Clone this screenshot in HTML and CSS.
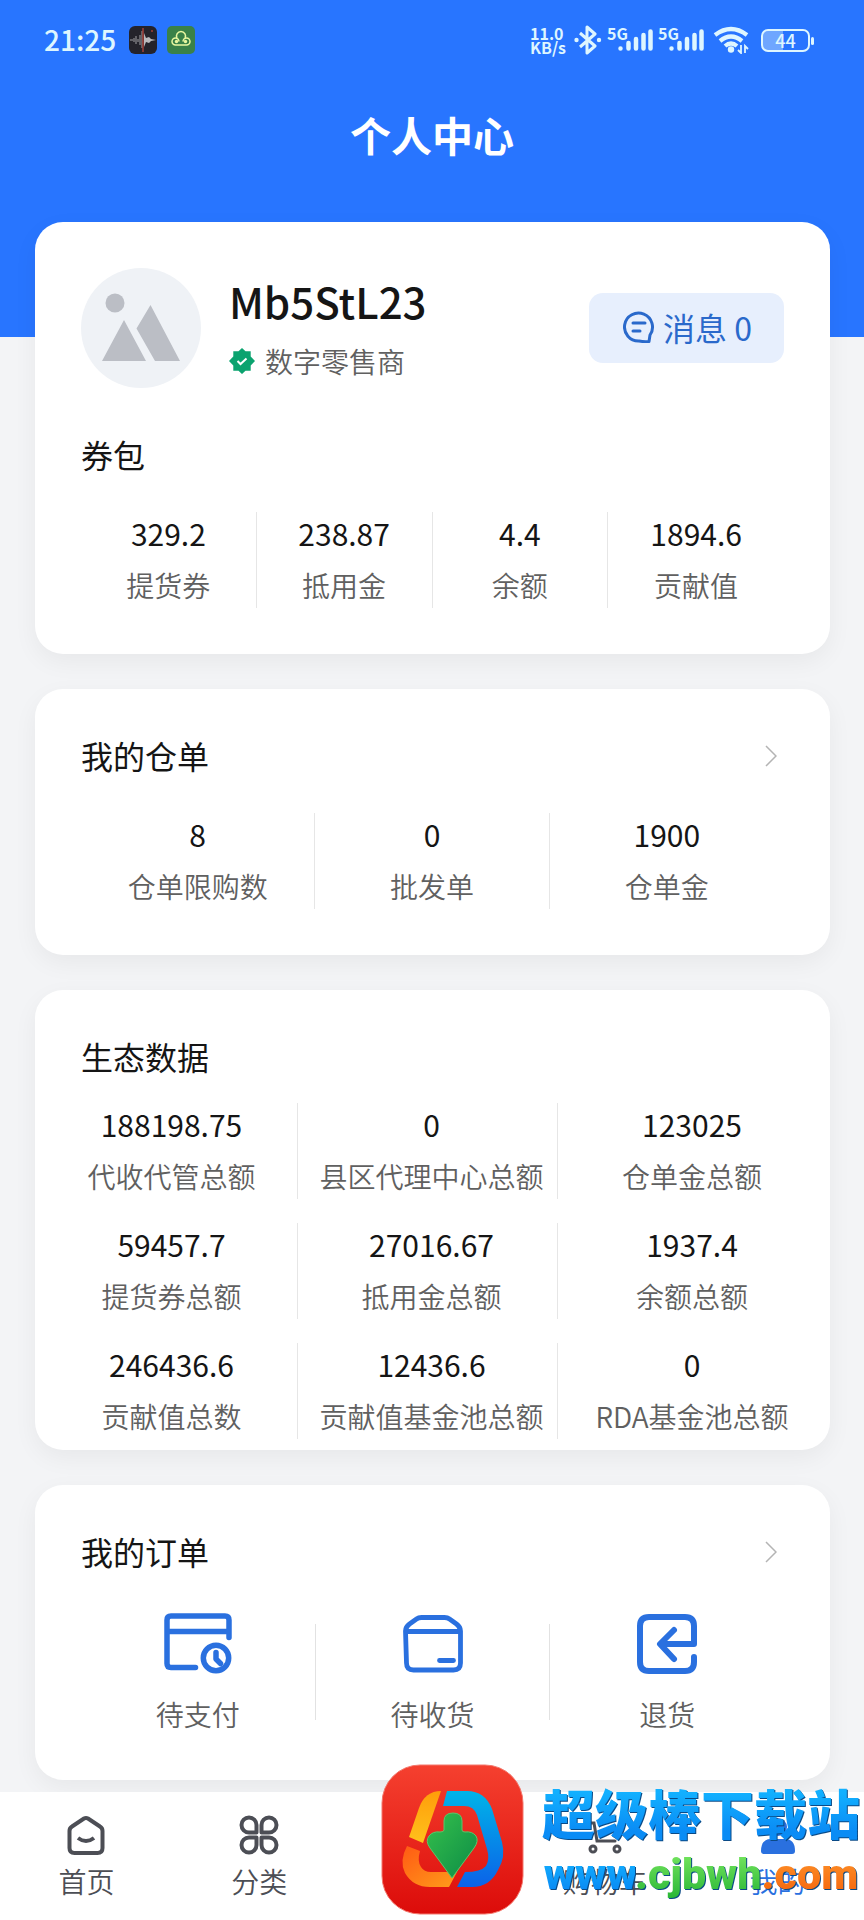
FILE: index.html
```html
<!DOCTYPE html>
<html lang="zh-CN">
  <head>
    <meta charset="utf-8">
    <title>个人中心</title>
    <meta name="viewport" content="width=device-width, initial-scale=1.0">
    <link rel="stylesheet" href="styles.css">
  </head>
  <body>
    <header class="top">
      <div class="status">
        <span class="time">21:25</span>
        <svg class="app" width="28" height="28" viewBox="0 0 28 28">
          <rect width="28" height="28" rx="6" fill="#24232b"/>
          <path d="M1 14h3M5 12v4M7 10v8M9 13v3M11 9v10M13 5v17" stroke="#77777c" stroke-width="1.5"/>
          <path d="M15 7l2 5 3-1 2 2 5 1-5 1-2 2-3-1-2 5z" fill="#b9b9bd"/>
          <path d="M14 2v24" stroke="#a3403a" stroke-width="1.5"/>
          <circle cx="23" cy="5" r="1" fill="#a3403a"/>
        </svg>
        <svg class="app" width="28" height="28" viewBox="0 0 28 28">
          <rect width="28" height="28" rx="5" fill="#3a8148"/>
          <path d="M10 12a4.500 4.500 0 1 1 8 0M8.500 19h11a3.500 3.500 0 1 0-3.500-3.500M8.500 19A3.500 3.500 0 1 1 12 15.500" fill="none" stroke="#e9f7a0" stroke-width="1.500"/>
          <circle cx="9.500" cy="15.500" r="1.700" fill="#e9f7a0"/>
          <circle cx="18.500" cy="15.500" r="1.700" fill="#e9f7a0"/>
        </svg>
        <span class="speed">11.0<br>KB/s</span>
        <svg class="bt" width="28" height="30" viewBox="0 0 28 30">
          <path d="M6 8l15 13-8 7V2l8 7L6 22" fill="none" stroke="currentColor" stroke-width="3" stroke-linejoin="round"/>
          <circle cx="2.5" cy="15" r="2.2" fill="currentColor"/>
          <circle cx="25" cy="15" r="2.2" fill="currentColor"/>
        </svg>
        <span class="signal">
          <b>5G</b>
          <svg width="35" height="22" viewBox="0 0 35 22"><path d="M2.500 19.500v0M10.500 14v5.500M18 10v9.500M25.500 6v13.500M32.500 2.500v17" stroke="currentColor" stroke-width="4.500" stroke-linecap="round"/></svg>
        </span>
        <span class="signal">
          <b>5G</b>
          <svg width="35" height="22" viewBox="0 0 35 22"><path d="M2.500 19.500v0M10.500 14v5.500M18 10v9.500M25.500 6v13.500M32.500 2.500v17" stroke="currentColor" stroke-width="4.500" stroke-linecap="round"/></svg>
        </span>
        <svg class="wifi" width="36" height="28" viewBox="0 0 36 28">
          <path d="M2 9q16-12 32 0M7 15q11-9 22 0M12 20q6-5 12 0" fill="none" stroke="currentColor" stroke-width="4.200"/>
          <circle cx="18" cy="23.500" r="3.200" fill="currentColor"/>
          <path d="M28 19v8l-3-3M32 27v-7l3 3" fill="none" stroke="currentColor" stroke-width="1.800"/>
        </svg>
        <span class="battery">44</span>
      </div>
      <h1>个人中心</h1>
    </header>

    <main>
      <section class="card first">
        <div class="user">
          <svg class="avatar" width="120" height="120" viewBox="0 0 120 120">
            <circle cx="60" cy="60" r="60" fill="#eff2f6"/>
            <g fill="#bbbec5">
              <circle cx="34" cy="35" r="9.500"/>
              <path d="M43 52l22 41H21zM69.500 37L99 93H74L55.500 60.500z"/>
            </g>
          </svg>
          <div class="who">
            <div class="name">Mb5StL23</div>
            <div class="role">
              <svg width="26" height="26" viewBox="0 0 26 26">
                <path d="M13 0l3.500 3.300h5.200v5.200L26 13l-4.300 4.500v5.200h-5.200L13 26l-3.500-3.300H4.300v-5.200L0 13l4.300-4.500V3.300h5.200z" fill="#0ba36f"/>
                <path d="M8.500 13l3 3 6-5.500" fill="none" stroke="#fff" stroke-width="2"/>
              </svg>
              <span>数字零售商</span>
            </div>
          </div>
          <button class="message" type="button">
            <svg width="32" height="32" viewBox="0 0 32 32" fill="none" stroke="currentColor" stroke-width="3" stroke-linecap="round" stroke-linejoin="round">
              <path d="M27 24a14 14 0 1 0-11 6q5 1 10 .5z"/>
              <path d="M10 12h12M10 20h7"/>
            </svg>
            <span>消息 0</span>
          </button>
        </div>
        <h2>券包</h2>
        <div class="stats four">
          <div class="stat"><b>329.2</b><span>提货券</span></div>
          <div class="stat"><b>238.87</b><span>抵用金</span></div>
          <div class="stat"><b>4.4</b><span>余额</span></div>
          <div class="stat"><b>1894.6</b><span>贡献值</span></div>
        </div>
      </section>

      <section class="card">
        <div class="head">
          <h2>我的仓单</h2>
          <a href="#" aria-label="我的仓单"><svg width="12" height="22" viewBox="0 0 12 22"><path d="M1 1l10 10L1 21" fill="none" stroke="#b4b4b4" stroke-width="1.500"/></svg></a>
        </div>
        <div class="stats">
          <div class="stat"><b>8</b><span>仓单限购数</span></div>
          <div class="stat"><b>0</b><span>批发单</span></div>
          <div class="stat"><b>1900</b><span>仓单金</span></div>
        </div>
      </section>

      <section class="card data">
        <h2>生态数据</h2>
        <div class="stats">
          <div class="stat"><b>188198.75</b><span>代收代管总额</span></div>
          <div class="stat"><b>0</b><span>县区代理中心总额</span></div>
          <div class="stat"><b>123025</b><span>仓单金总额</span></div>
          <div class="stat"><b>59457.7</b><span>提货券总额</span></div>
          <div class="stat"><b>27016.67</b><span>抵用金总额</span></div>
          <div class="stat"><b>1937.4</b><span>余额总额</span></div>
          <div class="stat"><b>246436.6</b><span>贡献值总数</span></div>
          <div class="stat"><b>12436.6</b><span>贡献值基金池总额</span></div>
          <div class="stat"><b>0</b><span>RDA基金池总额</span></div>
        </div>
      </section>

      <section class="card">
        <div class="head">
          <h2>我的订单</h2>
          <a href="#" aria-label="我的订单"><svg width="12" height="22" viewBox="0 0 12 22"><path d="M1 1l10 10L1 21" fill="none" stroke="#b4b4b4" stroke-width="1.500"/></svg></a>
        </div>
        <div class="orders">
          <a class="order" href="#">
            <svg width="68" height="62" viewBox="0 0 68 62" fill="none" stroke="currentColor" stroke-width="5.500" stroke-linecap="round" stroke-linejoin="round">
              <path d="M31.500 54.500H7q-4 0-4-4V7q0-4 4-4h54q4 0 4 4v17.500M3 18.500h62"/>
              <circle cx="52" cy="45" r="12.700"/>
              <path d="M52 39.500v6.500l4.500 4.500"/>
            </svg>
            <span>待支付</span>
          </a>
          <i class="line"></i>
          <a class="order" href="#">
            <svg width="62" height="62" viewBox="0 0 62 62" fill="none" stroke="currentColor" stroke-width="4.800" stroke-linecap="round" stroke-linejoin="round">
              <path d="M3.500 18q0-4 4-7l7-5q2-1.500 5-1.500h23q3 0 5 1.500l7 5q4 3 4 7v32q0 7-7 7h-40q-7 0-7-7zM4 18.500h54M37.500 47.500h14"/>
            </svg>
            <span>待收货</span>
          </a>
          <i class="line"></i>
          <a class="order" href="#">
            <svg width="62" height="62" viewBox="0 0 62 62" fill="none" stroke="currentColor" stroke-width="6" stroke-linecap="round" stroke-linejoin="round">
              <path d="M58 44v5q0 9-9 9H13q-9 0-9-9V13q0-9 9-9h36q9 0 9 9v18H25M38 17L24 31l14 15"/>
            </svg>
            <span>退货</span>
          </a>
        </div>
      </section>
    </main>

    <nav class="tabs">
      <a class="tab" href="#">
        <svg width="40" height="40" viewBox="0 0 40 40" fill="none" stroke="currentColor" stroke-width="4" stroke-linecap="round" stroke-linejoin="round">
          <path d="M3.500 16q0-3 2.500-4.500L18 3.500q2-1.200 4 0l12 8q2.500 1.500 2.500 4.500v17q0 5-5 5h-23q-5 0-5-5z"/>
          <path d="M12 23q8 6 16 0" stroke-linecap="butt"/>
        </svg>
        <span>首页</span>
      </a>
      <a class="tab" href="#">
        <svg width="40" height="40" viewBox="0 0 40 40" fill="none" stroke="currentColor" stroke-width="4" stroke-linejoin="round">
          <path d="M17.500 17.500V10A7.500 7.500 0 1 0 10 17.500zM22.500 17.500V10A7.500 7.500 0 1 1 30 17.500zM17.500 22.500V30A7.500 7.500 0 1 1 10 22.500zM22.500 22.500V30A7.500 7.500 0 1 0 30 22.500z"/>
        </svg>
        <span>分类</span>
      </a>
      <a class="tab cart" href="#">
        <svg width="40" height="40" viewBox="0 0 40 40" fill="none" stroke="currentColor" stroke-width="3">
          <path d="M4 8h5l3 18h18" stroke-linecap="round"/>
          <circle cx="8" cy="34" r="3"/>
          <circle cx="32" cy="34" r="3"/>
        </svg>
        <span>购物车</span>
      </a>
      <a class="tab active" href="#">
        <svg width="40" height="40" viewBox="0 0 40 40" fill="currentColor">
          <circle cx="20" cy="12" r="9"/>
          <path d="M3 36q0-12 10-12h14q10 0 10 12 0 3-3 3H6q-3 0-3-3z"/>
        </svg>
        <span>我的</span>
      </a>

      <div class="mark">
        <svg width="143" height="151" viewBox="0 0 143 151">
          <defs>
            <linearGradient id="red" x1="0" y1="0" x2="0" y2="1"><stop offset="0" stop-color="#f5402f"/><stop offset="1" stop-color="#dc0c0a"/></linearGradient>
            <linearGradient id="blue" x1="0" y1="0" x2="0" y2="1"><stop offset="0" stop-color="#00b4e8"/><stop offset="1" stop-color="#0b62e8"/></linearGradient>
            <linearGradient id="yellow" x1="0" y1="0" x2="0" y2="1"><stop offset="0" stop-color="#ff9d0a"/><stop offset="1" stop-color="#ffc21c"/></linearGradient>
            <linearGradient id="orange" x1="0" y1="0" x2="1" y2="1"><stop offset="0" stop-color="#ff5a14"/><stop offset="1" stop-color="#ff9c1a"/></linearGradient>
            <linearGradient id="green" x1="0" y1="0" x2="1" y2="1"><stop offset="0" stop-color="#36c04c"/><stop offset="1" stop-color="#0c8c46"/></linearGradient>
          </defs>
          <rect x="1" y="1" width="141" height="149" rx="38" fill="url(#red)" stroke="#f4776c"/>
          <path d="M60 27L42 79 28 73 38 44q6-17 22-17z" fill="url(#yellow)"/>
          <path d="M66 27h20q18 0 25 18l10 33q4 15-4 28-8 17-26 17H76l8-15q16 0 21-6 4-7 1-17L96 51q-3-9-13-9H62z" fill="url(#blue)"/>
          <path d="M26 82l13 5q-3 10 1 16 3 5 10 5h26l-8 15H49q-17 0-25-14-6-12 2-27z" fill="url(#orange)"/>
          <path d="M63 57q0-8 9-8t9 8v9q0 2 3 2 7-1 11 4 3 5-2 12L71 114 49 84q-5-7-1-12 4-5 11-4 4 0 4-2z" fill="url(#green)" stroke="#5bc76a"/>
        </svg>
        <div class="words">
          <div class="site">超级棒下载站</div>
          <div class="url"><span class="www">www</span><span class="host">.cjbwh</span><span class="com">.com</span></div>
        </div>
      </div>
    </nav>
  </body>
</html>
```

FILE: styles.css
```css
* {
  box-sizing: border-box;
}

body {
  margin: 0;
  min-height: 100vh;
  display: flex;
  flex-direction: column;
  background: #f3f4f6;
  color: #151515;
  font-family: "Noto Sans CJK SC", sans-serif;
  font-size: 28px;
  line-height: 40px;
}

a {
  color: inherit;
  text-decoration: none;
}

h1, h2 {
  margin: 0;
  font-weight: 400;
}

svg {
  display: block;
  flex: none;
}

.top {
  height: 337px;
  background: #2875ff;
  color: #fff;
}

.status {
  display: flex;
  align-items: center;
  height: 80px;
  padding: 0 49px 0 44px;
  color: #def6ff;
}

.time {
  font-size: 28px;
  font-weight: 500;
  line-height: 36px;
  padding-bottom: 2px;
  margin-right: 13px;
}

.app {
  margin-right: 10px;
}

.speed {
  margin-left: auto;
  font-size: 16px;
  line-height: 14px;
  font-weight: 700;
}

.bt {
  margin-left: 8px;
}

.signal {
  display: flex;
  position: relative;
  width: 46px;
  margin-left: 5px;
  justify-content: flex-end;
}

.signal b {
  position: absolute;
  left: 0;
  top: -4px;
  font-size: 16px;
  line-height: 16px;
}

.wifi {
  margin-left: 9px;
}

.battery {
  position: relative;
  width: 49px;
  height: 23px;
  margin-left: 12px;
  margin-right: 5px;
  border: 2px solid #def6ff;
  border-radius: 7px;
  background: linear-gradient(90deg, #6fa6ff 44%, transparent 44%);
  font-size: 18px;
  line-height: 18px;
  font-weight: 500;
  text-align: center;
}

.battery::after {
  content: "";
  position: absolute;
  right: -6px;
  top: 6px;
  width: 3px;
  height: 8px;
  border-radius: 2px;
  background: #def6ff;
}

h1 {
  margin-top: 30px;
  font-size: 41px;
  line-height: 48px;
  font-weight: 700;
  text-align: center;
}

main {
  display: flex;
  flex-direction: column;
  gap: 35px;
  margin: -115px 34px 12px 35px;
}

.card {
  padding: 46px;
  border-radius: 28px;
  background: #fff;
  box-shadow: 0 8px 24px rgba(0, 0, 0, 0.05);
}

h2 {
  font-size: 32px;
  line-height: 40px;
  padding-bottom: 2px;
}

.head {
  display: flex;
  justify-content: space-between;
  align-items: center;
  padding-right: 7px;
}

.user {
  display: flex;
  align-items: center;
  margin-bottom: 46px;
}

.who {
  flex: 1;
  padding: 2px 0 0 28px;
}

.name {
  font-size: 42px;
  line-height: 48px;
  font-weight: 500;
  margin-bottom: 16px;
}

.role {
  display: flex;
  align-items: center;
  gap: 10px;
  color: #606060;
  font-weight: 350;
}

.message {
  display: flex;
  align-items: center;
  gap: 8px;
  height: 70px;
  padding: 0 32px 2px 34px;
  border: 0;
  border-radius: 14px;
  background: #e7effd;
  color: #2a69cb;
  font-family: inherit;
  font-size: 32px;
}

.stats {
  display: grid;
  grid-template-columns: repeat(3, 1fr);
  row-gap: 24px;
  margin-top: 36px;
}

.stats.four {
  grid-template-columns: repeat(4, 1fr);
}

.stat {
  display: flex;
  flex-direction: column;
  gap: 12px;
  padding: 1px 0 3px;
  border-right: 1px solid #e6e6e6;
  text-align: center;
  white-space: nowrap;
}

.stats .stat:nth-child(3n) {
  border-right: 0;
}

.stats.four .stat:nth-child(3) {
  border-right: 1px solid #e6e6e6;
}

.stats.four .stat:last-child {
  border-right: 0;
}

.stat b {
  font-size: 30px;
  font-weight: 400;
}

.stat span, .order span {
  color: #606060;
  font-weight: 350;
}

.card.data {
  padding-bottom: 11px;
}

.data .stats {
  margin: 25px -34px 0 -43px;
}

.data .stat {
  padding-left: 8px;
}

.orders {
  display: flex;
  margin-top: 40px;
}

.order {
  flex: 1;
  display: flex;
  flex-direction: column;
  align-items: center;
  gap: 19px;
  color: #2a70df;
}

.line {
  width: 1px;
  height: 96px;
  margin-top: 11px;
  background: #e2e2e2;
}

.tabs {
  position: relative;
  display: grid;
  grid-template-columns: repeat(5, 1fr);
  flex: 1;
  padding-top: 23px;
  background: #fff;
  color: #4c4e55;
}

.tab {
  display: flex;
  flex-direction: column;
  align-items: center;
  gap: 6px;
  font-weight: 350;
}

.cart {
  grid-column: 4;
}

.active {
  color: #2a70df;
}

/* site mark lying over the tab bar */
.mark {
  position: absolute;
  right: 4px;
  bottom: 5px;
  display: flex;
  gap: 18px;
}

.words {
  padding-top: 16px;
  text-align: center;
  white-space: nowrap;
}

.site, .url span {
  background: linear-gradient(#12b0ff 20%, #0a8cf5 80%);
  -webkit-background-clip: text;
  background-clip: text;
  color: transparent;
}

.site, .url {
  filter: drop-shadow(1px 1px 0 #0a4a86);
}

.site {
  font-size: 53px;
  line-height: 64px;
  font-weight: 900;
}

.url {
  font-family: Roboto, sans-serif;
  font-size: 43px;
  line-height: 60px;
  font-weight: 900;
}

.url .host {
  background-image: linear-gradient(#7dea62, #27b536);
}

.url .com {
  background-image: linear-gradient(#ff9a2e, #f4600a);
}
```
